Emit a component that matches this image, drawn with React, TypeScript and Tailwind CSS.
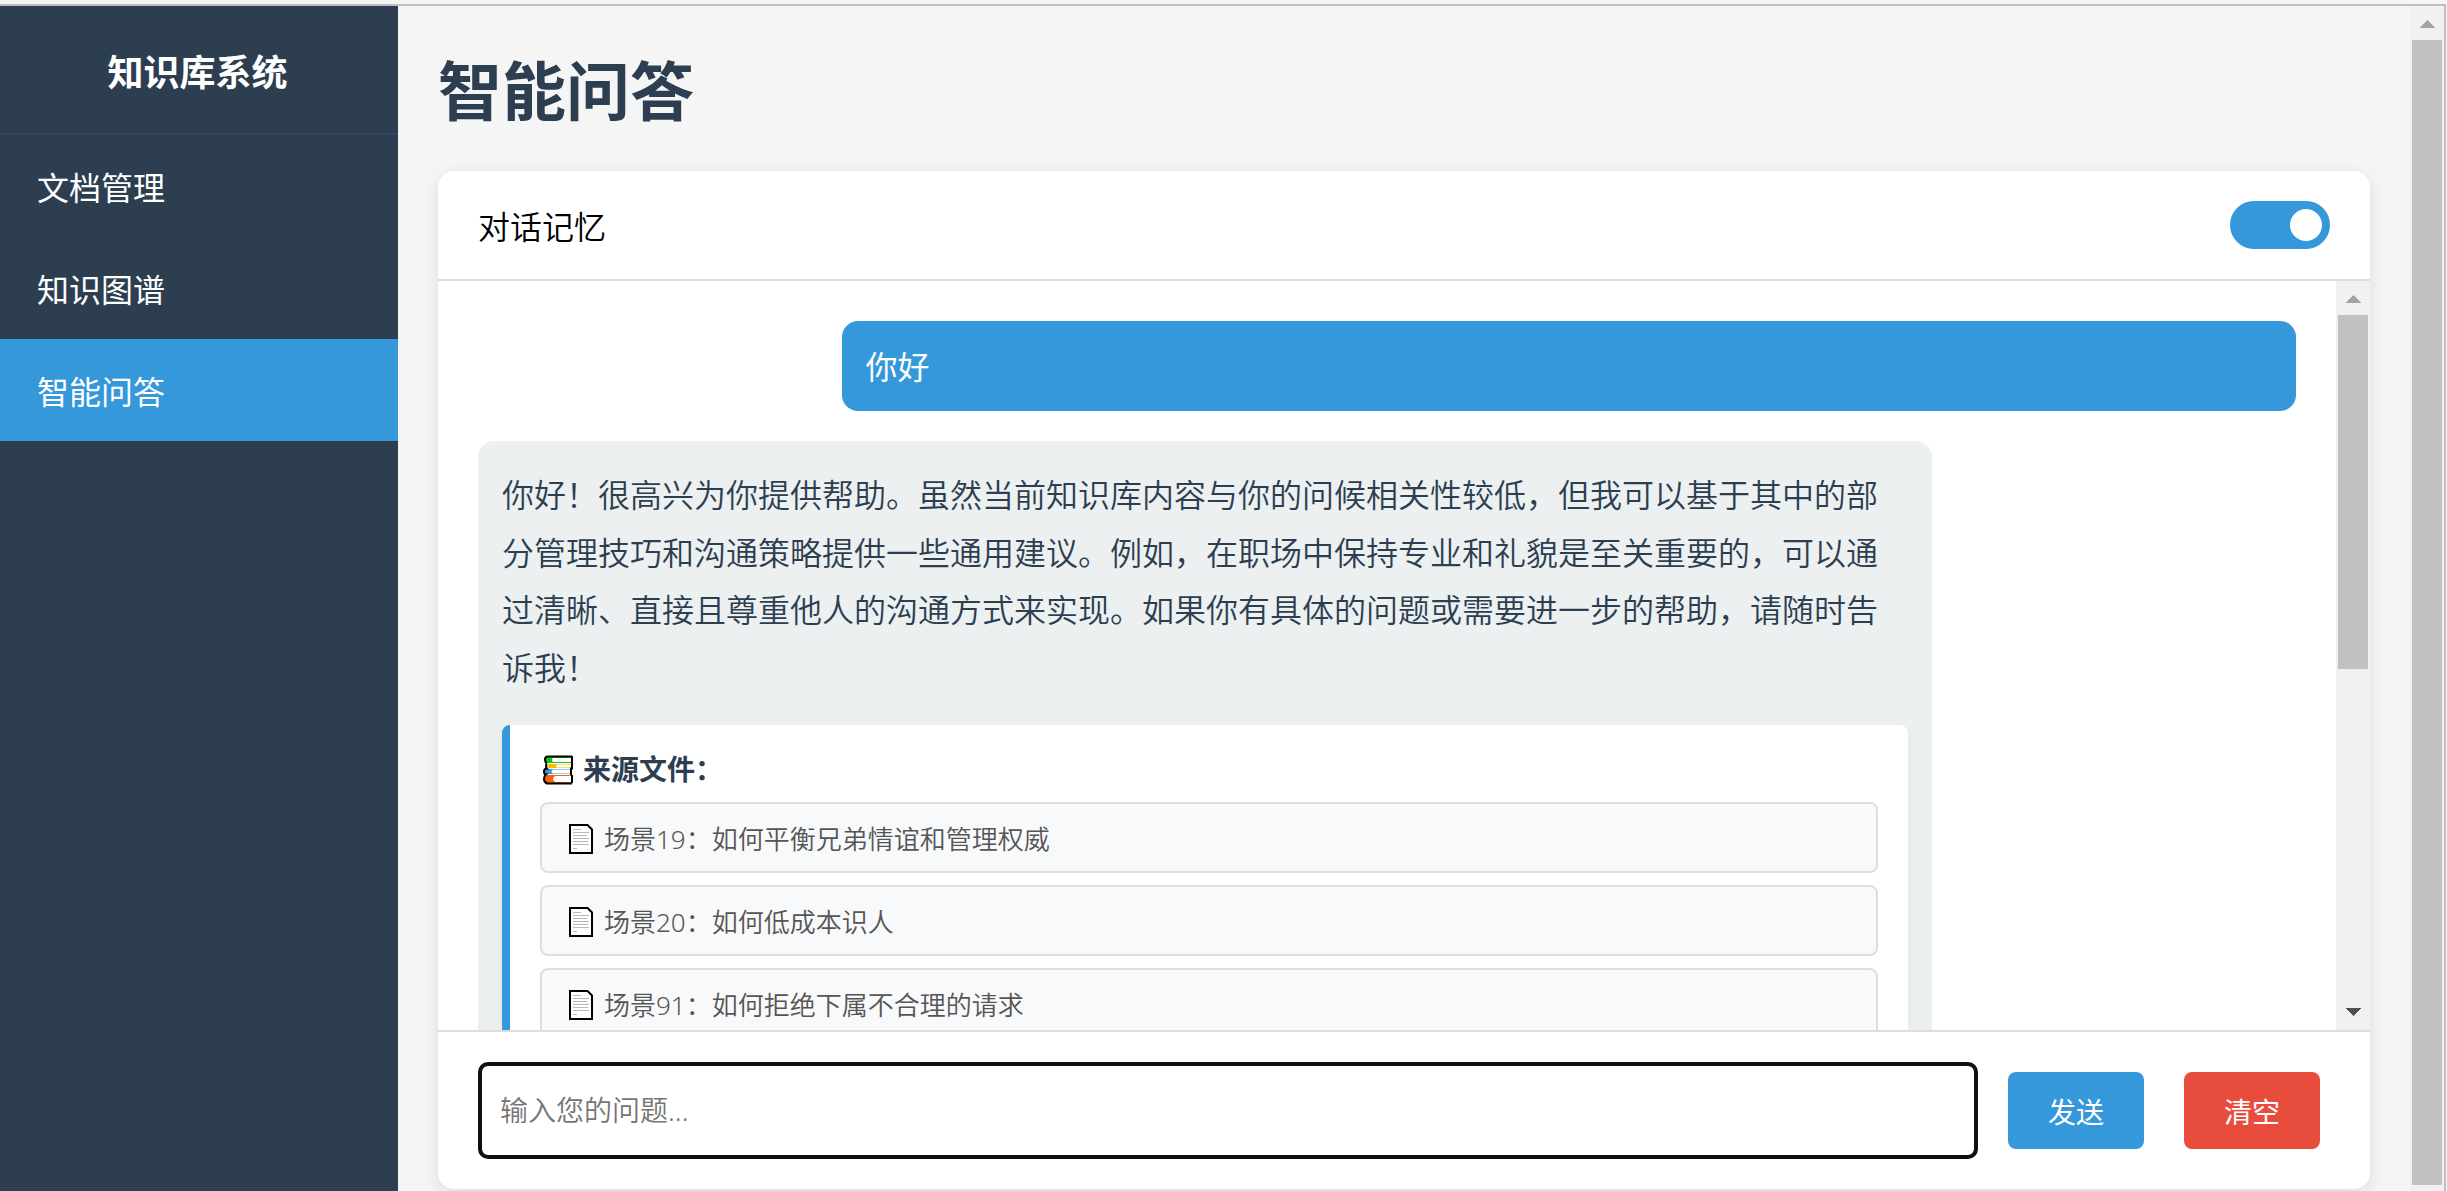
import React from 'react';

interface SourceFile {
  id: number;
  title: string;
}

const navItems = ['文档管理', '知识图谱', '智能问答'];

const sources: SourceFile[] = [
  { id: 19, title: '场景19：如何平衡兄弟情谊和管理权威' },
  { id: 20, title: '场景20：如何低成本识人' },
  { id: 91, title: '场景91：如何拒绝下属不合理的请求' },
];

const BooksIcon = () => (
  <svg width="30" height="30" viewBox="0 0 30 30" className="shrink-0">
    <path d="M5 1H29V8H5Q2 8 2 4.500T5 1Z" fill="#16c60c" />
    <path d="M10 3H28V7H10Q8 5 10 3Z" fill="#fff" />
    <path d="M6 9H29V13H6Q3 11 6 9Z" fill="#ffb900" />
    <path d="M14 9.500H28V12.500H14Q12 11 14 9.500Z" fill="#fff" />
    <path d="M4 14H27V19H4Q1 19 1 16.500T4 14Z" fill="#3a96dd" />
    <path d="M10 14.500H27V18.500H10Q7 16.500 10 14.500Z" fill="#fff" />
    <path d="M5 20H29V28H5Q1 28 1 24T5 20Z" fill="#f7630c" />
    <path d="M12 21H28V27H12Q8 24 12 21Z" fill="#fff" />
    <path
      d="M29 1.500H5Q2 1.500 2 4.500T4 8.500M29 8V13.500H28V19H29M4 8.500Q2 11 4 13.500Q1 13.500 1 16.500T3 19.500Q1 21 1 24T4 28.500H29M29 1V8M29 20V28"
      fill="none"
      stroke="#000"
      strokeWidth="2"
    />
  </svg>
);

const PageIcon = () => (
  <svg width="24" height="30" viewBox="0 0 24 30" className="shrink-0">
    <path d="M1 1H18.500L23 5.500V29H1Z" fill="#fff" stroke="#000" strokeWidth="2" />
    <path
      d="M4 5.500H12M4 8.500H20M4 11.500H18M4 14.500H20M4 17.500H19M4 20.500H20M4 24.500H8"
      stroke="#b8b8b8"
      strokeWidth="1"
      shapeRendering="crispEdges"
    />
  </svg>
);

const ArrowUp = () => (
  <svg width="16" height="8" viewBox="0 0 16 8" shapeRendering="crispEdges">
    <path d="M8 0L16 8H0Z" fill="#a3a3a3" />
  </svg>
);

const ArrowDown = () => (
  <svg width="16" height="8" viewBox="0 0 16 8" shapeRendering="crispEdges">
    <path d="M0 0H16L8 8Z" fill="#505050" />
  </svg>
);

const Sidebar = () => (
  <aside className="w-[398px] shrink-0 bg-[#2c3e50] text-white font-normal">
    <div className="h-[129px] border-b-2 border-[#34495e] flex justify-center pt-[43px] pr-[3px]">
      <h2 className="text-4xl leading-[48px] font-bold">知识库系统</h2>
    </div>
    <nav>
      {navItems.map((item) => (
        <a
          key={item}
          className={`flex items-center h-[102px] pl-[37px] pt-1 text-[32px] leading-[42px] ${item === '智能问答' ? 'bg-[#3498db]' : ''}`}
        >
          {item}
        </a>
      ))}
    </nav>
  </aside>
);

const ChatMessages = () => (
  <div className="flex h-[749px] overflow-hidden">
    <div className="flex-1 px-10 pt-10 flex flex-col gap-[30px]">
      {/* User message */}
      <div className="w-4/5 h-[90px] shrink-0 self-end flex items-center rounded-2xl bg-[#3498db] text-white px-6 pt-0.5 text-[32px] font-normal">
        你好
      </div>

      {/* Assistant message */}
      <div className="w-4/5 shrink-0 self-start rounded-2xl bg-[#ecf0f1] text-[#2c3e50] px-6 pt-[25px] pb-6">
        <p className="text-[32px] leading-[57.6px] whitespace-nowrap">
          你好！很高兴为你提供帮助。虽然当前知识库内容与你的问候相关性较低，但我可以基于其中的部<br />
          分管理技巧和沟通策略提供一些通用建议。例如，在职场中保持专业和礼貌是至关重要的，可以通<br />
          过清晰、直接且尊重他人的沟通方式来实现。如果你有具体的问题或需要进一步的帮助，请随时告<br />
          诉我！
        </p>
        <div className="mt-[29px] rounded-lg border-l-8 border-[#3498db] bg-white px-[30px] py-6 shadow-[0_4px_8px_rgba(0,0,0,0.05)]">
          <div className="flex items-center gap-2.5 h-[41px] mb-3 pl-[3px] text-[28px] font-bold">
            <BooksIcon />
            <span className="-mt-px">来源文件：</span>
          </div>
          <div className="flex flex-col gap-3">
            {sources.map((source) => (
              <div
                key={source.id}
                className="flex items-center gap-[11px] h-[71px] rounded-lg border-2 border-[#dedede] bg-[#f8f9fa] px-[27px] pt-0.5 text-[26px] text-[#555]"
              >
                <PageIcon />
                <span className="pt-px">{source.title}</span>
              </div>
            ))}
          </div>
        </div>
      </div>
    </div>

    <div className="w-[34px] shrink-0 bg-[#f1f1f1] flex flex-col items-center justify-between pb-3.5">
      <div className="flex flex-col items-center pt-3.5">
        <ArrowUp />
        <div className="mt-3 w-[30px] h-[354px] bg-[#c1c1c1]" />
      </div>
      <ArrowDown />
    </div>
  </div>
);

const App: React.FC = () => {
  return (
    <div className="w-[2447px] h-[1191px] overflow-hidden bg-[#f5f5f5] pt-1 pr-px font-[350] font-['Noto_Sans','Noto_Sans_CJK_SC',sans-serif]">
      <div className="flex h-[1187px] border-t-2 border-r-2 border-[#bfbfbf]">
        <Sidebar />

        <main className="flex-1 px-10 text-black">
          <h1 className="h-[165px] pt-[41px] text-[64px] leading-[88px] font-bold text-[#2c3e50]">智能问答</h1>

          <section className="h-[1018px] rounded-2xl bg-white shadow-[0_4px_16px_rgba(0,0,0,0.1)] overflow-hidden">
            <div className="flex items-center justify-between h-[110px] px-10 border-b-2 border-[#ddd]">
              <span className="pt-[3px] text-[32px]">对话记忆</span>
              <div className="flex items-center justify-end w-[100px] h-12 rounded-full bg-[#3498db] px-2">
                <div className="size-8 rounded-full bg-white" />
              </div>
            </div>

            <ChatMessages />

            <div className="flex items-center h-[159px] border-t-2 border-[#ddd] px-10">
              <input
                type="text"
                placeholder="输入您的问题..."
                className="w-[1500px] h-[97px] rounded-[10px] border-4 border-[#101010] px-[18px] pb-0.5 text-[28px] placeholder:text-[#757575] outline-none"
              />
              <button className="ml-[30px] w-[136px] h-[77px] pt-0.5 rounded-lg bg-[#3498db] text-white text-[28px] font-normal">发送</button>
              <button className="ml-10 w-[136px] h-[77px] pt-0.5 rounded-lg bg-[#e74c3c] text-white text-[28px] font-normal">清空</button>
            </div>
          </section>
        </main>

        {/* Page scrollbar */}
        <div className="w-[34px] shrink-0 bg-[#f1f1f1] flex flex-col items-center pt-3.5">
          <ArrowUp />
          <div className="mt-3 w-[30px] h-[1145px] bg-[#c1c1c1]" />
        </div>
      </div>
    </div>
  );
};

export default App;
